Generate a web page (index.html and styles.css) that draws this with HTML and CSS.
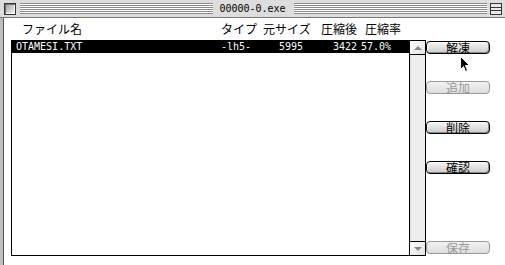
FILE: index.html
```html
<!DOCTYPE html>
<html lang="ja">
<head>
<meta charset="utf-8">
<title>00000-0.exe</title>
<link rel="stylesheet" href="styles.css">
</head>
<body>
<div class="window">
  <div class="titlebar">
    <div class="closebox"></div>
    <div class="stripes"></div>
    <div class="title">00000-0.exe</div>
    <div class="stripes"></div>
    <div class="zoombox"><div class="zoominner"></div></div>
  </div>
  <div class="body">
    <div class="frame"></div>
    <div class="content">
      <div class="listcol">
        <div class="header">
          <span class="h-name">ファイル名</span>
          <span class="h-type">タイプ</span>
          <span class="h-size">元サイズ</span>
          <span class="h-comp">圧縮後</span>
          <span class="h-ratio">圧縮率</span>
        </div>
        <div class="listbox">
          <div class="list">
            <div class="row selected">
              <span class="c-name">OTAMESI.TXT</span>
              <span class="c-type">-lh5-</span>
              <span class="c-size">5995</span>
              <span class="c-comp">3422</span>
              <span class="c-ratio">57.0%</span>
            </div>
          </div>
          <div class="scrollbar">
            <div class="arrow up"><span class="tri-up"></span></div>
            <div class="track"></div>
            <div class="arrow down"><span class="tri-down"></span></div>
          </div>
        </div>
      </div>
      <div class="buttons">
        <button class="btn">解凍</button>
        <button class="btn" disabled>追加</button>
        <button class="btn">削除</button>
        <button class="btn">確認</button>
        <button class="btn last" disabled>保存</button>
      </div>
    </div>
    <svg class="cursor" width="12" height="17" viewBox="0 0 12 17">
      <path d="M0.5 0.5 L0.5 13.5 L3.5 10.5 L5.5 15.5 L7.5 14.5 L5.5 9.5 L9.5 9.5 Z" fill="#000" stroke="#fff" stroke-width="1"/>
    </svg>
  </div>
</div>
</body>
</html>
```
FILE: styles.css
```css
* { box-sizing: border-box; }
html, body { margin: 0; padding: 0; background: #fff; }
body {
  width: 505px;
  height: 265px;
  overflow: hidden;
  font-family: "Noto Sans CJK JP", "Noto Sans", sans-serif;
  font-size: 12px;
  color: #000;
}
.window {
  width: 505px;
  height: 265px;
  display: flex;
  flex-direction: column;
  background: #fff;
}
.titlebar {
  height: 18px;
  flex: none;
  display: flex;
  align-items: center;
  background: #dddddd;
  border-bottom: 1px solid #777;
  padding: 0 3px 0 4px;
}
.closebox {
  width: 12px;
  height: 12px;
  border: 1px solid #333;
  background: linear-gradient(135deg, #999 0%, #ccc 50%, #f4f4f4 100%);
  box-shadow: inset 1px 1px 0 #777, inset -1px -1px 0 #fff;
  flex: none;
}
.stripes {
  flex: 1;
  height: 11px;
  margin: 0 2px 0 4px;
  background: repeating-linear-gradient(to bottom, #8a8a8a 0 1px, #ffffff 1px 2px);
}
.title {
  flex: none;
  padding: 0 4px;
  font-family: "DejaVu Sans Mono", monospace;
  font-size: 10px;
  line-height: 12px;
  color: #000;
}
.zoombox {
  width: 12px;
  height: 12px;
  flex: none;
  border: 1px solid #333;
  background: #e8e8e8;
  display: flex;
  align-items: center;
  margin-left: 1px;
}
.zoominner {
  width: 100%;
  height: 4px;
  border-top: 1px solid #333;
  border-bottom: 1px solid #333;
}
.body {
  flex: 1;
  display: flex;
  position: relative;
}
.frame {
  width: 4px;
  flex: none;
  background: #bdbdbd;
  border-right: 1px solid #555;
}
.content {
  flex: 1;
  display: flex;
  padding-left: 7px;
}
.listcol {
  width: 415px;
  flex: none;
  display: flex;
  flex-direction: column;
}
.header {
  height: 22px;
  display: flex;
  align-items: flex-end;
  padding-bottom: 4px;
  line-height: 14px;
  white-space: nowrap;
}
.h-name { width: 210px; padding-left: 11px; }
.h-type { width: 42px; }
.h-size { width: 58px; }
.h-comp { width: 44px; }
.h-ratio { flex: 1; }
.listbox {
  height: 216px;
  border: 1px solid #000;
  display: flex;
}
.list {
  width: 397px;
  flex: none;
}
.row {
  height: 12px;
  display: flex;
  align-items: center;
  font-family: "DejaVu Sans Mono", monospace;
  font-size: 10px;
  line-height: 12px;
  white-space: nowrap;
}
.row.selected { background: #000; color: #fff; }
.c-name { width: 209px; padding-left: 4px; }
.c-type { width: 50px; }
.c-size { width: 32px; text-align: right; }
.c-comp { width: 54px; text-align: right; }
.c-ratio { padding-left: 4px; }
.scrollbar {
  width: 16px;
  flex: none;
  border-left: 1px solid #000;
  display: flex;
  flex-direction: column;
  background: #eeeeee;
}
.arrow {
  height: 14px;
  flex: none;
  display: flex;
  align-items: center;
  justify-content: center;
  background: linear-gradient(135deg, #ffffff, #e2e2e2);
}
.arrow.up { border-bottom: 1px solid #000; }
.arrow.down { border-top: 1px solid #000; }
.track { flex: 1; background: #eeeeee; box-shadow: inset 1px 0 0 #ddd; }
.tri-up, .tri-down {
  width: 0;
  height: 0;
  border-left: 4px solid transparent;
  border-right: 4px solid transparent;
}
.tri-up { border-bottom: 4px solid #888; }
.tri-down { border-top: 4px solid #888; }
.buttons {
  margin-top: 22px;
  height: 216px;
  width: 64px;
  flex: none;
  display: flex;
  flex-direction: column;
  gap: 27px;
  padding: 1px 0 2px;
}
.btn {
  height: 13px;
  width: 64px;
  flex: none;
  padding: 0;
  margin: 0;
  border: 1px solid #000;
  border-radius: 4px;
  background: linear-gradient(to bottom, #f6f6f6 0%, #dcdcdc 60%, #c8c8c8 100%);
  box-shadow: inset -1px -1px 0 #888, inset 1px 1px 0 #fff;
  font-family: "Noto Sans CJK JP", sans-serif;
  font-size: 12px;
  line-height: 11px;
  color: #000;
  text-align: center;
  overflow: visible;
}
.btn:disabled {
  border-color: #999;
  color: #9a9a9a;
  background: linear-gradient(to bottom, #f2f2f2, #dedede);
  box-shadow: none;
}
.btn.last { margin-top: auto; }
.cursor {
  position: absolute;
  left: 460px;
  top: 38px;
}
```
